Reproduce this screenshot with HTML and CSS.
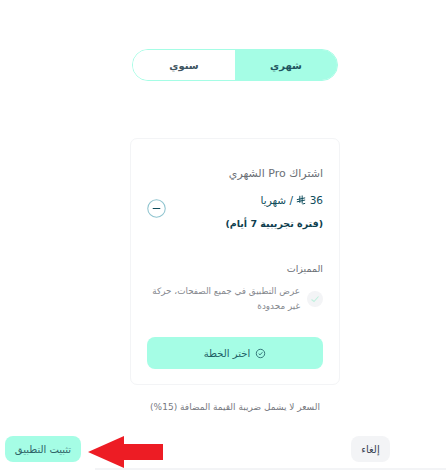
FILE: index.html
```html
<!DOCTYPE html>
<html lang="ar" dir="rtl">
<head>
<meta charset="utf-8">
<title>اشتراك Pro</title>
<link rel="stylesheet" href="styles.css">
</head>
<body>
<main class="page">
  <div class="plans">
    <div class="toggle">
      <button class="tab tab-active">شهري</button>
      <button class="tab">سنوي</button>
    </div>
    <section class="card">
      <div class="head">
        <div class="head-text">
          <h2 class="plan">اشتراك Pro الشهري</h2>
          <p class="price">36
            <svg class="riyal" viewBox="0 0 12 12" aria-hidden="true"><path d="M4.6 1v8.4M7.4 .6v9.6M1 5.6l10-2.2M1 8.2l10-2.2M7.8 10.8l3.2-.8" fill="none" stroke="currentColor" stroke-width="1.2"/></svg>
            / شهريا</p>
          <p class="trial">(فترة تجريبية 7 أيام)</p>
        </div>
        <svg class="minus" viewBox="0 0 20 20" aria-hidden="true"><circle cx="10" cy="10" r="9.2" fill="none" stroke="#8fc4cf" stroke-width="1.1"/><path d="M6.5 10h7" stroke="#0f4c5c" stroke-width="1.2" stroke-linecap="round"/></svg>
      </div>
      <h3 class="features-title">المميزات</h3>
      <div class="feature">
        <span class="check"><svg viewBox="0 0 12 12" aria-hidden="true"><path d="M2.5 6.5l2.5 2L9.5 3.5" fill="none" stroke="#bff0de" stroke-width="1.1"/></svg></span>
        <p class="feature-text">عرض التطبيق في جميع الصفحات، حركة غير محدودة</p>
      </div>
      <button class="choose">
        <svg class="ok" viewBox="0 0 12 12" aria-hidden="true"><circle cx="6" cy="6" r="4.6" fill="none" stroke="currentColor" stroke-width=".9"/><path d="M4 6.1l1.5 1.4 2.6-2.9" fill="none" stroke="currentColor" stroke-width=".9"/></svg>
        اختر الخطة
      </button>
    </section>
    <p class="note">السعر لا يشمل ضريبة القيمة المضافة (15%)</p>
  </div>
  <div class="actions">
    <button class="cancel">إلغاء</button>
    <button class="install">تثبيت التطبيق</button>
  </div>
  <div class="edge"></div>
</main>
<svg class="arrow" viewBox="0 0 75 32" aria-hidden="true"><path d="M0 16L36 0V8H75V24H36V32Z" fill="#ed1c24"/></svg>
</body>
</html>
```
FILE: styles.css
```css
* { box-sizing: border-box; }
html, body { margin: 0; height: 470px; overflow: hidden; background: #fff; }
body { position: relative; font-family: "DejaVu Sans", "Noto Sans", sans-serif; color: #6b7280; }
p, h2, h3 { margin: 0; font-weight: 400; }
button { font-family: inherit; border: 0; padding: 0; }
.page { display: flex; flex-direction: column; padding-top: 49px; }
.plans { display: flex; flex-direction: column; align-items: center; padding-left: 24px; }
.toggle { display: flex; width: 206px; height: 32px; border: 1px solid #a5fde5; border-radius: 16px; overflow: hidden; background: #fff; }
.tab { flex: 1; background: #fff; font-size: 10px; font-weight: 700; color: #3f5560; }
.tab-active { background: #a5fde5; color: #1f5560; }
.card { width: 210px; height: 247px; margin-top: 57px; padding: 27px 16px 0; border: 1px solid #f3f4f6; border-radius: 7px; display: flex; flex-direction: column; }
.head { display: flex; justify-content: space-between; align-items: flex-start; }
.plan { font-size: 11px; line-height: 16px; color: #6b6f76; }
.price { font-size: 10.5px; line-height: 16px; margin-top: 10px; color: #0f4c5c; }
.riyal { width: 10px; height: 10px; vertical-align: -1px; }
.trial { font-size: 9.5px; line-height: 16px; margin-top: 8px; font-weight: 700; color: #0f3f4f; }
.minus { width: 19px; height: 19px; margin-top: 33px; }
.features-title { font-size: 9.5px; line-height: 14px; margin-top: 30px; color: #6b6f76; }
.feature { display: flex; align-items: center; gap: 7px; margin-top: 8px; }
.check { width: 16px; height: 16px; flex: none; border-radius: 50%; background: #f3f4f6; display: flex; align-items: center; justify-content: center; }
.check svg { width: 12px; height: 12px; }
.feature-text { font-size: 8.8px; line-height: 15px; color: #85888e; }
.choose { height: 32px; margin-top: 23px; border-radius: 8px; background: #a5fde5; color: #1f5f66; font-size: 10px; display: flex; align-items: center; justify-content: center; gap: 5px; flex: none; }
.ok { width: 11px; height: 11px; }
.note { margin-top: 15px; font-size: 9px; line-height: 14px; color: #77797f; }
.actions { display: flex; justify-content: space-between; align-items: center; padding: 0 56px 0 5px; margin-top: 22px; }
.cancel { width: 39px; height: 26px; border-radius: 8px; background: #f3f4f6; font-size: 10px; color: #374151; }
.install { width: 76px; height: 26px; border-radius: 8px; background: #a5fde5; font-size: 10px; color: #2f6468; }
.edge { height: 2px; margin: 6px 0 0 95px; background: #f3f4f6; }
.arrow { position: absolute; left: 88px; top: 436px; width: 75px; height: 32px; }
```
